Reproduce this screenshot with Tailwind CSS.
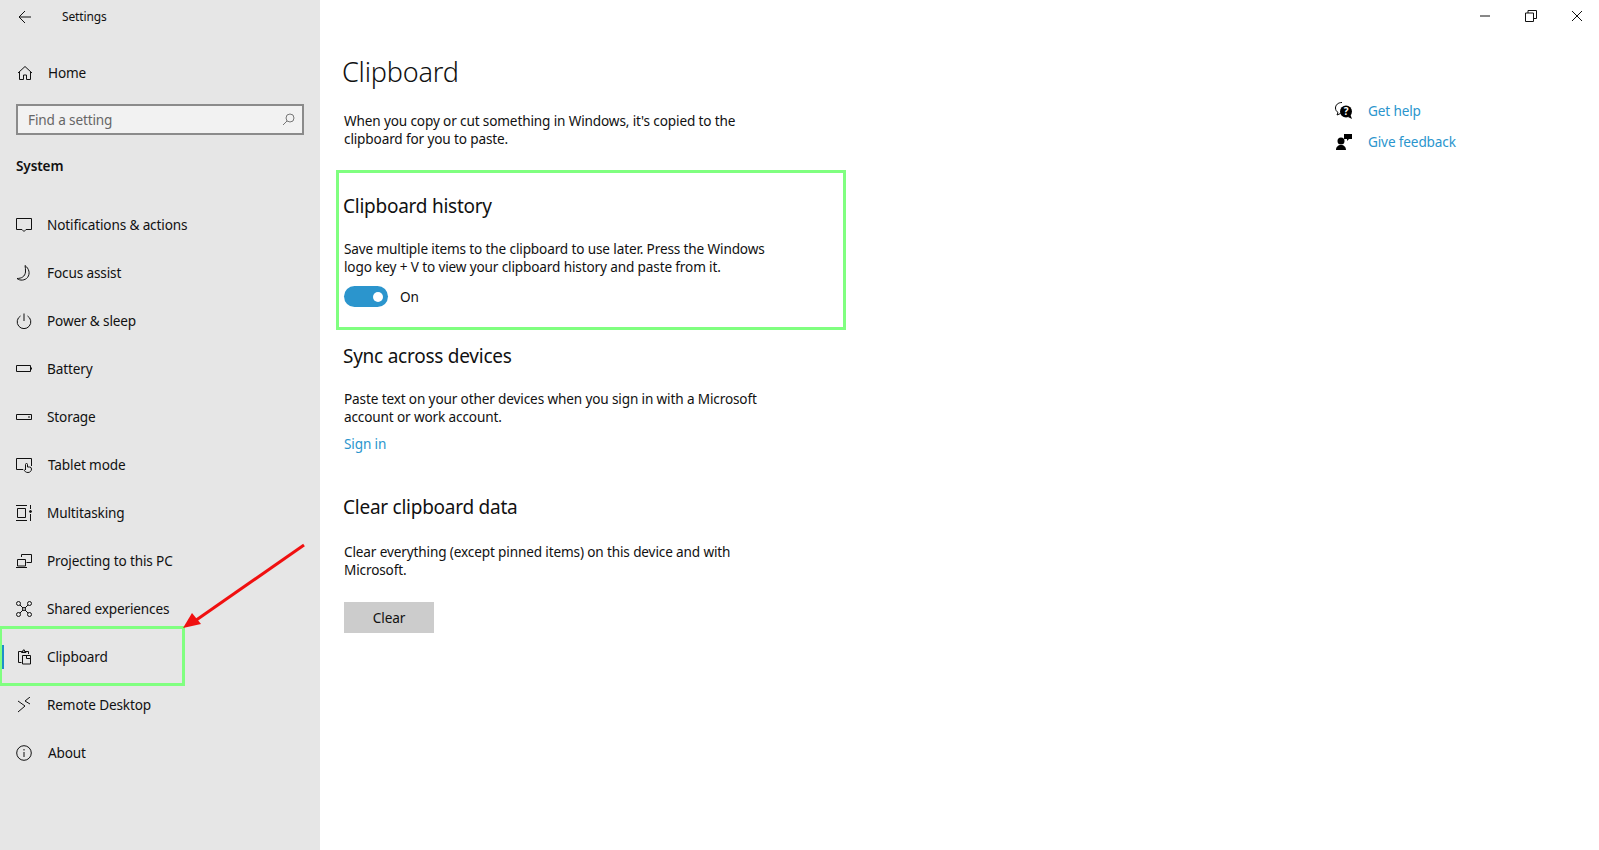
<!DOCTYPE html>
<html lang="en">
  <head>
    <meta charset="UTF-8" />
    <title>Settings - Clipboard</title>
    <script src="https://cdn.jsdelivr.net/npm/@tailwindcss/browser@4"></script>
  </head>
  <body class="h-[850px] w-[1599px] overflow-hidden bg-white font-['Noto_Sans',sans-serif] text-[13.6px] tracking-[-0.14px] text-[#111]">
    <div class="relative flex h-full">
      <!-- Sidebar -->
      <aside class="relative w-[320px] shrink-0 bg-[#e6e6e6]">
        <div class="flex h-[34px] items-center pl-[17px]">
          <svg class="h-[16px] w-[16px]" viewBox="0 0 16 16" fill="none" stroke="#111" stroke-width="1"><path d="M14 8H2M8 2 2 8l6 6" /></svg>
          <span class="ml-[29px] text-[12px]">Settings</span>
        </div>
        <a class="mt-[15px] flex h-[48px] items-center pl-[17px]">
          <svg class="h-[16px] w-[16px]" viewBox="0 0 16 16" fill="none" stroke="#111" stroke-width="1"><path d="M1 8 8 1.5 15 8M2.5 7v7.5h4V10h3v4.500h4V7" /></svg>
          <span class="ml-[15px]">Home</span>
        </a>
        <div class="mx-[16px] mt-[7px] flex h-[31px] items-center justify-between border-2 border-[#8b8b8b] bg-[#f2f2f2] pl-[10px] pr-[7px] text-[#666]">
          <span class="pt-px">Find a setting</span>
          <svg class="h-[13px] w-[13px]" viewBox="0 0 13 13" fill="none" stroke="#777" stroke-width="1"><circle cx="8" cy="5" r="4" /><path d="M5 8 1 12" /></svg>
        </div>
        <div class="mt-[18px] pl-[16px] font-semibold leading-[26px]">System</div>
        <nav class="mt-[22px]">
          <a class="flex h-[48px] items-center pl-[16px]">
            <svg class="h-[16px] w-[16px]" viewBox="0 0 16 16" fill="none" stroke="#111" stroke-width="1"><path d="M.500 1.500h15v11H10l-2 2-2-2H.500z" /></svg>
            <span class="ml-[15px]">Notifications &amp; actions</span>
          </a>
          <a class="flex h-[48px] items-center pl-[16px]">
            <svg class="h-[16px] w-[16px]" viewBox="0 0 16 16" fill="none" stroke="#111" stroke-width="1"><path d="M9 .5c4 3 5.500 8 2.500 12-2.500 3-7.500 3.500-10.500 1 4.500 0 8-2 8.500-6.500.2-2.500-.2-4.500-.5-6.500z" /></svg>
            <span class="ml-[15px]">Focus assist</span>
          </a>
          <a class="flex h-[48px] items-center pl-[16px]">
            <svg class="h-[16px] w-[16px]" viewBox="0 0 16 16" fill="none" stroke="#111" stroke-width="1"><path d="M4.500 3a6.800 6.800 0 1 0 7 0M8 .5V8" /></svg>
            <span class="ml-[15px]">Power &amp; sleep</span>
          </a>
          <a class="flex h-[48px] items-center pl-[16px]">
            <svg class="h-[16px] w-[16px]" viewBox="0 0 16 16" fill="none" stroke="#111" stroke-width="1"><path d="M.500 4.500h14v6H.500zM15.500 6.500v2" /></svg>
            <span class="ml-[15px]">Battery</span>
          </a>
          <a class="flex h-[48px] items-center pl-[16px]">
            <svg class="h-[16px] w-[16px]" viewBox="0 0 16 16" fill="none" stroke="#111" stroke-width="1"><path d="M.500 5.500h15v5H.500zM12 8h2" /></svg>
            <span class="ml-[15px]">Storage</span>
          </a>
          <a class="flex h-[48px] items-center pl-[16px]">
            <svg class="h-[16px] w-[16px]" viewBox="0 0 16 16" fill="none" stroke="#111" stroke-width="1"><path d="M7 12.500H.500v-11h15V9M9.500 13V7.500a1 1 0 0 1 2 0V10h2a2 2 0 0 1 2 2c0 2-1.500 3.500-3.500 3.500-2 0-3.500-1-4-3" /></svg>
            <span class="ml-[16px]">Tablet mode</span>
          </a>
          <a class="flex h-[48px] items-center pl-[16px]">
            <svg class="h-[16px] w-[16px]" viewBox="0 0 16 16" fill="none" stroke="#111" stroke-width="1"><path d="M0 .5h11M0 15.500h11M1.500 3.500h8v9h-8zM14.500 0v4M14.500 9v7" /><circle cx="14.500" cy="6.500" r="1" fill="#111" /></svg>
            <span class="ml-[15px]">Multitasking</span>
          </a>
          <a class="flex h-[48px] items-center pl-[16px]">
            <svg class="h-[16px] w-[16px]" viewBox="0 0 16 16" fill="none" stroke="#111" stroke-width="1"><path d="M5.500 4V1.500h10v8h-5M1.500 6.500h8V13h-8zM0 14.500h11" /></svg>
            <span class="ml-[15px]">Projecting to this PC</span>
          </a>
          <a class="flex h-[48px] items-center pl-[16px]">
            <svg class="h-[16px] w-[16px]" viewBox="0 0 16 16" fill="none" stroke="#111" stroke-width="1"><circle cx="2.500" cy="2.500" r="2" /><circle cx="13.500" cy="2.500" r="2" /><circle cx="2.500" cy="13.500" r="2" /><circle cx="13.500" cy="13.500" r="2" /><circle cx="8" cy="8" r="1.500" /><path d="m4 4 3 3M12 4 9 7M4 12l3-3M12 12 9 9" /></svg>
            <span class="ml-[15px]">Shared experiences</span>
          </a>
          <a class="relative flex h-[48px] items-center pl-[17px]">
            <span class="absolute left-[2px] top-[12px] h-[24px] w-[2px] bg-[#1e8fc9]"></span>
            <svg class="h-[16px] w-[16px]" viewBox="0 0 16 16" fill="none" stroke="#111" stroke-width="1"><path d="M4.500 13.500h-3v-11h3M9 2.500h2.500V5M4.500 3.500v-1H6V1h1.500v1.500H9v1zM5.500 6.500h8v8.500h-8zM9.500 6.500V9.500h4" /></svg>
            <span class="ml-[14px]">Clipboard</span>
          </a>
          <a class="flex h-[48px] items-center pl-[17px]">
            <svg class="h-[16px] w-[16px]" viewBox="0 0 16 16" fill="none" stroke="#111" stroke-width="1"><path d="m1 4 7 5-7 6M13 0 8 4l5 3" /></svg>
            <span class="ml-[14px]">Remote Desktop</span>
          </a>
          <a class="flex h-[48px] items-center pl-[16px]">
            <svg class="h-[16px] w-[16px]" viewBox="0 0 16 16" fill="none" stroke="#111" stroke-width="1"><circle cx="8" cy="8" r="7.300" /><path d="M8 7v5M8 4v1.500" /></svg>
            <span class="ml-[16px]">About</span>
          </a>
        </nav>
      </aside>

      <!-- Main -->
      <main class="flex-1 pl-[23px]">
        <h1 class="mt-[52px] -ml-px text-[27px] font-light leading-[40px] tracking-[-0.2px]">Clipboard</h1>
        <p class="mt-[20px] ml-[1px] w-[420px] leading-[18px]">When you copy or cut something in Windows, it's copied to the clipboard for you to paste.</p>
        <h2 class="mt-[44px] text-[19px] leading-[28px] tracking-[-0.25px]">Clipboard history</h2>
        <p class="mt-[20px] ml-[1px] w-[440px] leading-[18px]">Save multiple items to the clipboard to use later. Press the Windows logo key + V to view your clipboard history and paste from it.</p>
        <div class="mt-[10px] ml-[1px] flex items-center">
          <span class="flex h-[21px] w-[44px] items-center justify-end rounded-full bg-[#2b95cd] pr-[5px]"><span class="h-[10px] w-[10px] rounded-full bg-white"></span></span>
          <span class="ml-[12px] pt-px">On</span>
        </div>
        <h2 class="mt-[35px] text-[19px] leading-[28px] tracking-[-0.25px]">Sync across devices</h2>
        <p class="mt-[20px] ml-[1px] w-[440px] leading-[18px]">Paste text on your other devices when you sign in with a Microsoft account or work account.</p>
        <a class="mt-[8px] ml-[1px] block leading-[20px] text-[#2b95cd]">Sign in</a>
        <h2 class="mt-[39px] text-[19px] leading-[28px] tracking-[-0.25px]">Clear clipboard data</h2>
        <p class="mt-[22px] ml-[1px] w-[420px] leading-[18px]">Clear everything (except pinned items) on this device and with Microsoft.</p>
        <button class="mt-[23px] ml-[1px] h-[31px] w-[90px] bg-[#cccccc] pt-px">Clear</button>
      </main>

      <!-- Help links -->
      <aside class="w-[264px] shrink-0 pt-[95px]">
        <a class="flex h-[32px] items-center text-[#2b95cd]">
          <svg class="h-[18px] w-[18px]" viewBox="0 0 18 18">
            <path d="M7 .5C3 .5.500 3 .500 6c0 2 1 3.500 2.500 4.500L2 13l3.500-1.500" fill="none" stroke="#000" />
            <circle cx="11" cy="9.500" r="6" fill="#000" />
            <path d="m13 15 4 2-1.500-4z" fill="#000" />
            <text x="11" y="13" text-anchor="middle" font-size="10" font-weight="700" fill="#fff">?</text>
          </svg>
          <span class="ml-[15px]">Get help</span>
        </a>
        <a class="flex h-[30px] items-center text-[#2b95cd]">
          <svg class="h-[18px] w-[18px]" viewBox="0 0 18 18" fill="#000"><circle cx="6" cy="8" r="3.500" /><path d="M1 17c0-3 2-5 5-5s5 2 5 5zM9 1h8v5h-3l-2 2V6H9z" /></svg>
          <span class="ml-[15px]">Give feedback</span>
        </a>
      </aside>

      <!-- Window controls -->
      <div class="absolute right-[16px] top-[10px] flex items-center gap-[34px]">
        <svg class="h-[12px] w-[12px]" viewBox="0 0 12 12" stroke="#111" fill="none"><path d="M1 6h10" /></svg>
        <svg class="h-[12px] w-[12px]" viewBox="0 0 12 12" stroke="#111" fill="none"><path d="M.5 3h8v8.500h-8zM3 3V.5h8.500v8H8.500" /></svg>
        <svg class="h-[12px] w-[12px]" viewBox="0 0 12 12" stroke="#111" fill="none"><path d="m1 1 10 10M11 1 1 11" /></svg>
      </div>

      <!-- Annotations -->
      <div class="absolute left-[336px] top-[170px] h-[160px] w-[510px] border-[3px] border-[#80ff80]"></div>
      <div class="absolute left-[-1px] top-[626px] h-[60px] w-[186px] border-[3px] border-[#80ff80]"></div>
      <svg class="absolute left-[170px] top-[535px] h-[100px] w-[150px]" viewBox="0 0 150 100" fill="none">
        <path d="M134 10 22 88" stroke="#f01010" stroke-width="3" />
        <path d="m13 93 9-15 9 11z" fill="#f01010" />
      </svg>
    </div>
  </body>
</html>
